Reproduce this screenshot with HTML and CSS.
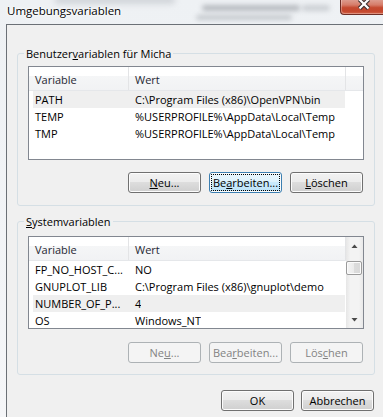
FILE: index.html
```html
<!DOCTYPE html>
<html lang="de">
<head>
<meta charset="utf-8">
<title>Umgebungsvariablen</title>
<link rel="stylesheet" href="styles.css">
</head>
<body>
<div class="window">
  <div class="titlebar">
    <span class="backdrop bd1"></span>
    <span class="backdrop bd2"></span>
    <span class="backdrop bd3"></span>
    <span class="backdrop bd4"></span>
    <span class="title">Umgebungsvariablen</span>
    <span class="close">
      <svg width="14" height="11" viewBox="0 0 14 11">
        <path d="M2.5 -0.5 L11.5 8.5 M11.5 -0.5 L2.5 8.5" stroke="#3b3232" stroke-width="4.4" fill="none"/>
        <path d="M2.5 -0.5 L11.5 8.5 M11.5 -0.5 L2.5 8.5" stroke="#ffffff" stroke-width="2.2" fill="none"/>
      </svg>
    </span>
  </div>
  <div class="client">
    <fieldset class="group">
      <legend>Benutzer<u>v</u>ariablen für Micha</legend>
      <div class="list">
        <div class="lmain">
          <div class="lhead">
            <span class="hc c1">Variable</span>
            <span class="hc c2">Wert</span>
            <span class="hc fill"></span>
          </div>
          <div class="row sel"><span class="c1">PATH</span><span class="c2">C:\Program Files (x86)\OpenVPN\bin</span></div>
          <div class="row"><span class="c1">TEMP</span><span class="c2">%USERPROFILE%\AppData\Local\Temp</span></div>
          <div class="row"><span class="c1">TMP</span><span class="c2">%USERPROFILE%\AppData\Local\Temp</span></div>
        </div>
      </div>
      <div class="btnrow">
        <button class="btn" type="button"><u>N</u>eu...</button>
        <button class="btn focus" type="button">Be<u>a</u>rbeiten...</button>
        <button class="btn" type="button"><u>L</u>öschen</button>
      </div>
    </fieldset>
    <fieldset class="group group2">
      <legend><u>S</u>ystemvariablen</legend>
      <div class="list list2">
        <div class="lmain">
          <div class="lhead">
            <span class="hc c1">Variable</span>
            <span class="hc c2">Wert</span>
          </div>
          <div class="row"><span class="c1">FP_NO_HOST_C...</span><span class="c2">NO</span></div>
          <div class="row"><span class="c1">GNUPLOT_LIB</span><span class="c2">C:\Program Files (x86)\gnuplot\demo</span></div>
          <div class="row sel"><span class="c1">NUMBER_OF_P...</span><span class="c2">4</span></div>
          <div class="row"><span class="c1">OS</span><span class="c2">Windows_NT</span></div>
        </div>
        <div class="sb">
          <div class="sbb"><svg width="7" height="4" viewBox="0 0 7 4"><path d="M0.5 4 L3.5 0.5 L6.5 4 Z" fill="#4a4a4a"/></svg></div>
          <div class="track"><div class="thumb"></div></div>
          <div class="sbb"><svg width="7" height="4" viewBox="0 0 7 4"><path d="M0.5 0 L3.5 3.5 L6.5 0 Z" fill="#4a4a4a"/></svg></div>
        </div>
      </div>
      <div class="btnrow">
        <button class="btn" type="button" disabled>Ne<u>u</u>...</button>
        <button class="btn" type="button" disabled>Bea<u>r</u>beiten...</button>
        <button class="btn" type="button" disabled>Lös<u>c</u>hen</button>
      </div>
    </fieldset>
    <div class="dlgbtns">
      <button class="btn" type="button">OK</button>
      <button class="btn" type="button">Abbrechen</button>
    </div>
  </div>
</div>
</body>
</html>
```
FILE: styles.css
```css
* { box-sizing: border-box; }
html, body { margin: 0; padding: 0; }
body {
  font-family: "Open Sans", "Liberation Sans", sans-serif;
  font-size: 11px;
  color: #000;
  background: #f2f4f6;
}
.window {
  width: 383px;
  height: 417px;
  overflow: hidden;
  display: flex;
  flex-direction: column;
  background: linear-gradient(to bottom, #eef1f4, #f5f6f8);
}
.titlebar {
  position: relative;
  height: 24px;
  flex: none;
  display: flex;
  align-items: flex-start;
}
.backdrop {
  position: absolute;
  display: block;
  border-radius: 3px;
}
.bd1 { left: 55px; top: -5px; width: 120px; height: 9px; background: #b9bdc3; filter: blur(3px); opacity: .55; }
.bd2 { left: 202px; top: 5px; width: 98px; height: 6px; background: #7f848b; filter: blur(2.5px); opacity: .5; }
.bd3 { left: 196px; top: 15px; width: 96px; height: 5px; background: #8a8f96; filter: blur(2.5px); opacity: .42; }
.bd4 { left: 302px; top: 5px; width: 28px; height: 6px; background: #8a8f96; filter: blur(2.5px); opacity: .35; }
.title {
  position: relative;
  padding: 3px 0 0 7px;
  font-size: 11.5px;
  line-height: 16px;
  text-shadow: 0 0 6px #fff, 0 0 3px #fff, 0 0 2px #fff;
}
.close {
  position: relative;
  margin-left: auto;
  width: 43px;
  height: 15px;
  padding-left: 3px;
  display: flex;
  justify-content: center;
  align-items: flex-start;
  border-left: 1px solid #6d2d25;
  border-bottom: 1px solid #6d2d25;
  border-bottom-left-radius: 4px;
  background: linear-gradient(#dd9b8d 0%, #d67c69 35%, #c54a30 55%, #c4472d 80%, #d3654a 100%);
  box-shadow: inset 1px -1px 0 rgba(255,255,255,.3);
}
.client {
  flex: 1;
  margin-left: 6px;
  border-left: 1px solid #6b7076;
  border-top: 1px solid #6b7076;
  background: #f0f0f0;
  padding: 21px 0 0 10px;
}
.group {
  margin: 0;
  min-width: 0;
  width: 358px;
  border: 1px solid #d5dfe5;
  border-radius: 3px;
  padding: 5px 10px 12px 10px;
}
.group2 {
  margin-top: 8px;
  padding-top: 7px;
  padding-bottom: 11px;
}
legend {
  padding: 0 2px;
  margin-left: -4px;
  height: 15px;
  line-height: 15px;
  white-space: nowrap;
}
.list {
  width: 336px;
  height: 94px;
  border: 1px solid #828790;
  background: #fff;
  display: flex;
  overflow: hidden;
}
.list2 { height: 93px; }
.lmain {
  flex: 1;
  min-width: 0;
  display: flex;
  flex-direction: column;
}
.lhead {
  display: flex;
  flex: none;
  height: 24px;
  background: linear-gradient(#ffffff 0, #ffffff 38%, #f5f6f7 38%, #f1f2f4 100%);
  border-bottom: 1px solid #e5e7ea;
}
.hc {
  padding-top: 2px;
  line-height: 21px;
  border-right: 1px solid #e3e4e6;
  color: #1f2733;
  white-space: nowrap;
}
.hc.c1 { width: 100px; padding-left: 6px; flex: none; }
.hc.c2 { width: 217px; padding-left: 6px; flex: none; }
.hc.fill { flex: 1; border-right: none; }
.row {
  display: flex;
  flex: none;
  height: 17px;
  width: 312px;
  margin-left: 4px;
  padding-top: 1px;
  line-height: 16px;
  white-space: nowrap;
}
.row.sel { background: #efefef; }
.row .c1 { width: 96px; flex: none; padding-left: 2px; overflow: hidden; }
.row .c2 { padding-left: 6px; overflow: hidden; }
.sb {
  width: 17px;
  flex: none;
  display: flex;
  flex-direction: column;
  background: linear-gradient(to right, #e6e6e6, #f3f3f3 25%, #f3f3f3 75%, #e9e9e9);
}
.sbb {
  height: 17px;
  flex: none;
  display: flex;
  align-items: center;
  justify-content: center;
}
.track {
  flex: 1;
  padding-top: 7px;
}
.thumb {
  height: 14px;
  margin-right: 1px;
  border: 1px solid #9b9b9b;
  border-radius: 2px;
  background: linear-gradient(to right, #f4f4f4 0%, #ebebeb 50%, #dcdcdc 50%, #d9d9d9 100%);
  box-shadow: inset 0 0 0 1px #fbfbfb;
}
.btnrow {
  display: flex;
  justify-content: flex-end;
  gap: 8px;
  padding-right: 1px;
  margin-top: 12px;
}
.group2 .btnrow { margin-top: 13px; }
.btn {
  width: 73px;
  height: 21px;
  padding: 0;
  font: inherit;
  font-size: 11px;
  line-height: 19px;
  color: #000;
  text-align: center;
  border: 1px solid #707070;
  border-radius: 3px;
  background: linear-gradient(#f2f2f2 0%, #ebebeb 50%, #dddddd 50%, #cfcfcf 100%);
  box-shadow: inset 0 0 0 1px #fcfcfc;
}
.btn.focus {
  border-color: #3c7fb1;
  background: linear-gradient(#eaf6fd 0%, #dcf1fc 50%, #c9eafc 50%, #bde3f8 100%);
  outline: 1px dotted #000;
  outline-offset: -3px;
}
.btn:disabled {
  border-color: #adb2b5;
  background: #f4f4f4;
  color: #838383;
  box-shadow: none;
}
.dlgbtns {
  display: flex;
  justify-content: flex-end;
  gap: 7px;
  width: 358px;
  padding-right: 1px;
  margin-top: 15px;
}
```
